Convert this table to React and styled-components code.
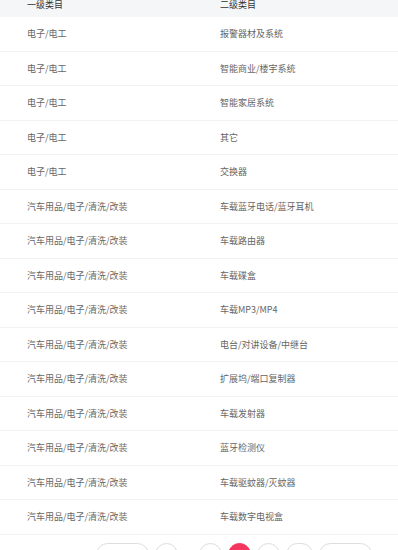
import styled, { createGlobalStyle } from 'styled-components'

const GlobalStyle = createGlobalStyle`
  body {
    margin: 0;
    background: #fff;
    font-family: "Noto Sans CJK SC", "Noto Sans", sans-serif;
  }
`

const rows = [
  ['电子/电工', '报警器材及系统'],
  ['电子/电工', '智能商业/楼宇系统'],
  ['电子/电工', '智能家居系统'],
  ['电子/电工', '其它'],
  ['电子/电工', '交换器'],
  ['汽车用品/电子/清洗/改装', '车载蓝牙电话/蓝牙耳机'],
  ['汽车用品/电子/清洗/改装', '车载路由器'],
  ['汽车用品/电子/清洗/改装', '车载碟盒'],
  ['汽车用品/电子/清洗/改装', '车载MP3/MP4'],
  ['汽车用品/电子/清洗/改装', '电台/对讲设备/中继台'],
  ['汽车用品/电子/清洗/改装', '扩展坞/端口复制器'],
  ['汽车用品/电子/清洗/改装', '车载发射器'],
  ['汽车用品/电子/清洗/改装', '蓝牙检测仪'],
  ['汽车用品/电子/清洗/改装', '车载驱蚊器/灭蚊器'],
  ['汽车用品/电子/清洗/改装', '车载数字电视盒'],
]

const Page = () => (
  <Wrapper>
    <GlobalStyle />
    <Table>
      <HeadRow>
        <Cell>一级类目</Cell>
        <Cell>二级类目</Cell>
      </HeadRow>
      {rows.map(([a, b], i) => (
        <Row key={i}>
          <Cell>{a}</Cell>
          <Cell>{b}</Cell>
        </Row>
      ))}
    </Table>
    <Pager>
      <PageBtn wide>上一页</PageBtn>
      <PageBtn>1</PageBtn>
      <Dots>…</Dots>
      <PageBtn>4</PageBtn>
      <PageBtn active>5</PageBtn>
      <PageBtn>6</PageBtn>
      <PageBtn narrowWide>10</PageBtn>
      <PageBtn wide>下一页</PageBtn>
    </Pager>
  </Wrapper>
)

const Wrapper = styled.div`
  width: 398px;
  margin-top: -9px;
`

const Table = styled.div`
  display: flex;
  flex-direction: column;
`

const HeadRow = styled.div`
  display: grid;
  grid-template-columns: 193px 1fr;
  align-items: center;
  height: 26px;
  padding-left: 27px;
  background: #f5f6f8;
  color: #333;
  font-size: 9px;
`

const Row = styled.div`
  display: grid;
  grid-template-columns: 193px 1fr;
  align-items: center;
  box-sizing: border-box;
  height: 34.5px;
  padding-left: 27px;
  border-bottom: 1px solid #f2f2f2;
  color: #666;
  font-size: 9px;
`

const Cell = styled.div`
  white-space: nowrap;
`

const Pager = styled.div`
  display: flex;
  justify-content: flex-end;
  align-items: center;
  gap: 6px;
  padding: 8px 26px 20px 0;
`

const PageBtn = styled.div`
  box-sizing: border-box;
  width: ${p => (p.wide ? '53px' : p.narrowWide ? '27px' : '23px')};
  height: 23px;
  border-radius: 12px;
  border: 1px solid ${p => (p.active ? '#f5365c' : '#ddd')};
  background: ${p => (p.active ? '#f5365c' : '#fff')};
  color: ${p => (p.active ? '#fff' : '#666')};
  font-size: 9px;
  display: flex;
  align-items: center;
  justify-content: center;
`

const Dots = styled.div`
  width: 9px;
  color: #999;
  font-size: 9px;
  text-align: center;
`

export default Page
